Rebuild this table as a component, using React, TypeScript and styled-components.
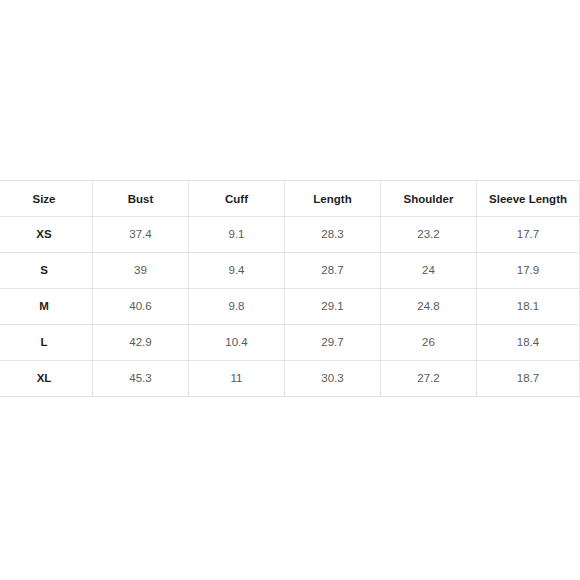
import React from "react";
import styled, { createGlobalStyle } from "styled-components";

const columns = ["Size", "Bust", "Cuff", "Length", "Shoulder", "Sleeve Length"];

const rows = [
  ["XS", "37.4", "9.1", "28.3", "23.2", "17.7"],
  ["S", "39", "9.4", "28.7", "24", "17.9"],
  ["M", "40.6", "9.8", "29.1", "24.8", "18.1"],
  ["L", "42.9", "10.4", "29.7", "26", "18.4"],
  ["XL", "45.3", "11", "30.3", "27.2", "18.7"],
];

export default function App() {
  return (
    <Page>
      <GlobalStyle />
      <Chart>
        {columns.map((c) => (
          <HeadCell key={c}>{c}</HeadCell>
        ))}
        {rows.map((r) =>
          r.map((v, i) => (
            <Cell key={r[0] + i} $label={i === 0}>
              {v}
            </Cell>
          ))
        )}
      </Chart>
    </Page>
  );
}

const GlobalStyle = createGlobalStyle`
  html, body {
    margin: 0;
    background: #fff;
    font-family: "Liberation Sans", Arial, sans-serif;
  }
`;

const Page = styled.div`
  width: 580px;
  height: 580px;
  overflow: hidden;
  padding-top: 180px;
  box-sizing: border-box;
`;

const Chart = styled.div`
  display: grid;
  grid-template-columns: 96px 96px 96px 96px 96px 103px;
  grid-auto-rows: 36px;
  margin-left: -4px;
  width: max-content;
  border-top: 1px solid #e4e4e4;
  border-right: 1px solid #e4e4e4;
`;

const Cell = styled.div<{ $label?: boolean }>`
  display: flex;
  align-items: center;
  justify-content: center;
  border-left: 1px solid #e4e4e4;
  border-bottom: 1px solid #e4e4e4;
  font-size: 11.5px;
  font-weight: ${(p) => (p.$label ? 700 : 400)};
  color: ${(p) => (p.$label ? "#1e1e1e" : "#5a5a5a")};
  margin-top: -1px;
  &:nth-child(6n + 1) {
    border-left: none;
  }
`;

const HeadCell = styled(Cell)`
  font-weight: 700;
  color: #1e1e1e;
  margin-top: 0;
`;
